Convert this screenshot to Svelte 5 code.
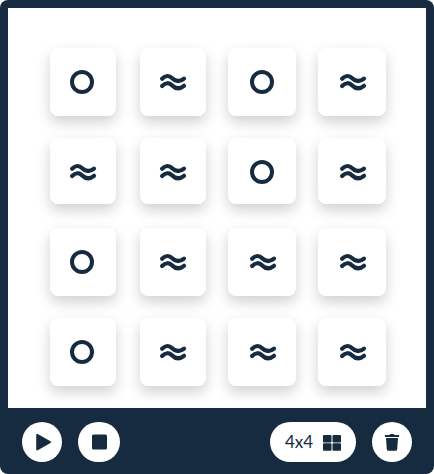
<script>
  let playing = $state(false);
  let cells = $state([
    'ring', 'wave', 'ring', 'wave',
    'wave', 'wave', 'ring', 'wave',
    'ring', 'wave', 'wave', 'wave',
    'ring', 'wave', 'wave', 'wave'
  ]);

  function toggle(i) {
    cells[i] = cells[i] === 'ring' ? 'wave' : 'ring';
  }

  function clear() {
    cells = cells.map(() => 'wave');
  }
</script>

<main class="player">
  <div class="board">
    {#each cells as cell, i}
      <button class="cell" aria-label={cell} onclick={() => toggle(i)}>
        {#if cell === 'ring'}
          <svg width="26" height="24" viewBox="0 0 26 24" fill="none" stroke="currentColor" stroke-width="4">
            <circle cx="12" cy="12" r="10" />
          </svg>
        {:else}
          <svg width="28" height="18" viewBox="0 0 28 18" fill="none" stroke="currentColor" stroke-width="4.2" stroke-linecap="round" stroke-linejoin="round">
            <path d="M3.1 5.8C6.6 2.2 10.2 2.2 13.2 5.2S20 9.6 25 5.6" />
            <path d="M3.1 13C6.6 9.4 10.2 9.4 13.2 12.4S20 16.8 25 12.8" />
          </svg>
        {/if}
      </button>
    {/each}
  </div>

  <footer class="controls">
    <div class="group">
      <button class="round" aria-label="Play" aria-pressed={playing} onclick={() => (playing = true)}>
        <svg width="40" height="40" viewBox="0 0 40 40" fill="currentColor" stroke="currentColor" stroke-width="2" stroke-linejoin="round">
          <path d="M15.2 12.9V27.5L28 20.2Z" />
        </svg>
      </button>
      <button class="round stop" aria-label="Stop" onclick={() => (playing = false)}>
        <svg width="16" height="16" viewBox="0 0 16 16" fill="currentColor">
          <rect x="1" y="0.5" width="15" height="15" rx="1.5" />
        </svg>
      </button>
    </div>
    <div class="group">
      <button class="size">
        <span>4x4</span>
        <svg width="18" height="16" viewBox="0 0 18 16" fill="currentColor">
          <rect y="1" width="8.5" height="7.5" rx="1" />
          <rect x="9.5" y="1" width="8.5" height="7.5" rx="1" />
          <rect y="9.3" width="8.5" height="7.5" rx="1" />
          <rect x="9.5" y="9.3" width="8.5" height="7.5" rx="1" />
        </svg>
      </button>
      <button class="round" aria-label="Clear board" onclick={clear}>
        <svg width="14" height="17" viewBox="0 0 14 17" fill="currentColor">
          <path d="M0 1H4.6L5.2 0H8.8L9.4 1H14V3H0Z" />
          <path d="M1 4H13L12.2 15.3Q12.1 16.8 10.5 16.8H3.5Q1.9 16.8 1.8 15.3Z" />
        </svg>
      </button>
    </div>
  </footer>
</main>

<style>
  .player {
    --ink: #172b40;
    box-sizing: border-box;
    padding: 8px 8px 0;
    border-radius: 8px;
    background: var(--ink);
    font-family: Lato, 'Noto Sans', sans-serif;
  }

  button {
    display: flex;
    align-items: center;
    justify-content: center;
    margin: 0;
    padding: 0;
    border: 0;
    background: #fff;
    color: var(--ink);
    font-family: inherit;
    cursor: pointer;
  }

  svg {
    display: block;
    flex: none;
    overflow: visible;
  }

  .board {
    display: grid;
    grid-template-columns: 68fr 66fr 68fr 68fr;
    grid-auto-rows: 68px;
    gap: 22px;
    padding: 40px 40px 22px 42px;
    background: #fff;
  }

  .cell {
    border-radius: 8px;
    box-shadow: 0 6px 14px rgba(0, 0, 0, 0.19);
  }

  /* the first column keeps a slightly wider gutter */
  .cell:nth-child(4n + 1) {
    margin-right: 2px;
  }

  .cell:nth-child(4n + 3),
  .cell:nth-child(4n + 4) {
    padding-left: 2px;
  }

  /* the second row is a touch shorter than the others */
  .cell:nth-child(n + 5):nth-child(-n + 8) {
    margin-bottom: 2px;
    padding-top: 2px;
  }

  .controls {
    display: flex;
    justify-content: space-between;
    padding: 14px 14px 12px;
  }

  .group {
    display: flex;
    gap: 16px;
  }

  .round {
    width: 40px;
    height: 40px;
    border-radius: 20px;
  }

  .stop {
    width: 42px;
  }

  .size {
    gap: 10px;
    width: 86px;
    height: 40px;
    border-radius: 20px;
    font-size: 17px;
    line-height: 24px;
  }
</style>
